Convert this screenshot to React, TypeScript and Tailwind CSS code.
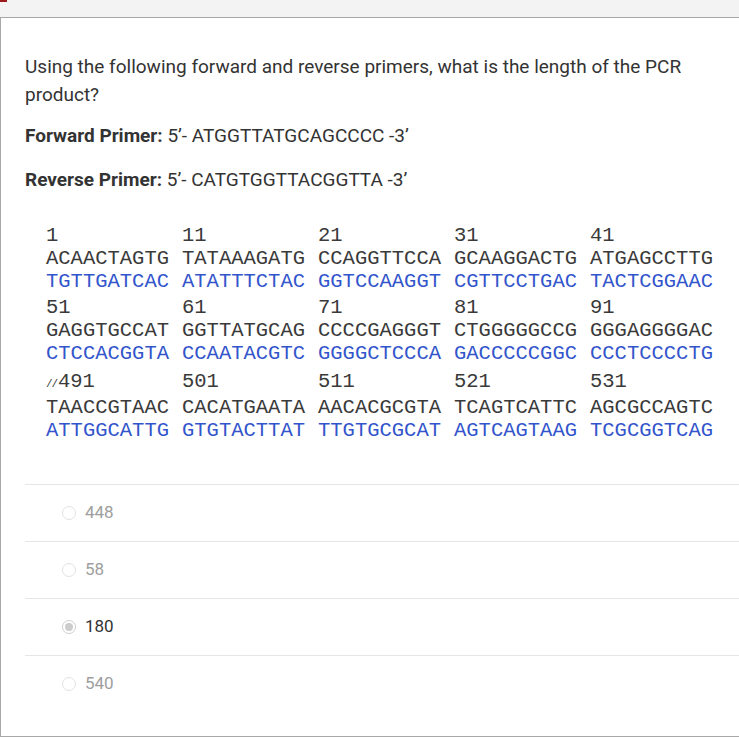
import React from 'react'

type SeqBlock = {
  nums: string[]
  top: string[]
  bottom: string[]
  cut?: boolean
}

const blocks: SeqBlock[] = [
  {
    nums: ['1', '11', '21', '31', '41'],
    top: ['ACAACTAGTG', 'TATAAAGATG', 'CCAGGTTCCA', 'GCAAGGACTG', 'ATGAGCCTTG'],
    bottom: ['TGTTGATCAC', 'ATATTTCTAC', 'GGTCCAAGGT', 'CGTTCCTGAC', 'TACTCGGAAC'],
  },
  {
    nums: ['51', '61', '71', '81', '91'],
    top: ['GAGGTGCCAT', 'GGTTATGCAG', 'CCCCGAGGGT', 'CTGGGGGCCG', 'GGGAGGGGAC'],
    bottom: ['CTCCACGGTA', 'CCAATACGTC', 'GGGGCTCCCA', 'GACCCCCGGC', 'CCCTCCCCTG'],
  },
  {
    nums: ['491', '501', '511', '521', '531'],
    top: ['TAACCGTAAC', 'CACATGAATA', 'AACACGCGTA', 'TCAGTCATTC', 'AGCGCCAGTC'],
    bottom: ['ATTGGCATTG', 'GTGTACTTAT', 'TTGTGCGCAT', 'AGTCAGTAAG', 'TCGCGGTCAG'],
    cut: true,
  },
]

const options = [
  {label: '448', selected: false},
  {label: '58', selected: false},
  {label: '180', selected: true},
  {label: '540', selected: false},
]

function Radio({checked}: { checked: boolean }) {
  return (
    <span
      className={
        checked
          ? 'w-[14px] h-[14px] rounded-full border border-[#cfcfcf] bg-white flex items-center justify-center'
          : 'w-[14px] h-[14px] rounded-full border border-[#e2e2e2] bg-white'
      }
    >
      {checked && <span className="w-[8px] h-[8px] rounded-full bg-[#cccccc]"/>}
    </span>
  )
}

function Sequence() {
  return (
    <div className="ml-[21px] text-[20.5px] leading-[23px] text-[#3a3a3a]"
         style={{fontFamily: '"Liberation Mono", "DejaVu Sans Mono", monospace'}}>
      {blocks.map((b, bi) => (
        <div key={bi} className={bi === 0 ? '' : bi === 1 ? 'mt-[3px]' : 'mt-[5px]'}>
          <div className="grid grid-cols-[repeat(5,136px)]">
            {b.nums.map((n, i) => (
              <span key={n} className="flex items-baseline">
                {b.cut && i === 0 && (
                  <span className="w-[12px] text-[11px] tracking-[-1px]">//</span>
                )}
                <span>{n}</span>
              </span>
            ))}
          </div>
          <div className="grid grid-cols-[repeat(5,136px)]">
            {b.top.map((s) => <span key={s}>{s}</span>)}
          </div>
          <div className="grid grid-cols-[repeat(5,136px)] text-[#3355cc]">
            {b.bottom.map((s) => <span key={s}>{s}</span>)}
          </div>
        </div>
      ))}
    </div>
  )
}

export default function App() {
  return (
    <div className="w-[739px] h-[737px] overflow-hidden bg-white"
         style={{fontFamily: 'Roboto, "Liberation Sans", sans-serif'}}>
      {/* window strip */}
      <div className="relative h-[18px] bg-[#f3f3f3] border-b border-[#a8a8a8]">
        <span className="absolute left-0 top-0 w-[7px] h-[2px] bg-[#9b1a1a]"/>
      </div>

      {/* question panel */}
      <div className="w-[760px] h-[719px] border-l border-b border-[#a8a8a8] pl-[24px] pt-[35px]">
        <p className="max-w-[680px] text-[19px] leading-[28px] text-[#333333] mb-[13px]">
          Using the following forward and reverse primers, what is the length of the PCR product?
        </p>
        <p className="text-[19px] leading-[28px] text-[#333333] mb-[16px]">
          <span className="font-bold">Forward Primer:</span> 5’- ATGGTTATGCAGCCCC -3’
        </p>
        <p className="text-[19px] leading-[28px] text-[#333333]">
          <span className="font-bold">Reverse Primer:</span> 5’- CATGTGGTTACGGTTA -3’
        </p>

        <div className="mt-[30px]">
          <Sequence/>
        </div>

        {/* answers */}
        <div className="mt-[42px]">
          {options.map((o) => (
            <div key={o.label}
                 className="h-[57px] border-t border-[#e6e6e6] flex items-center gap-[9px] pl-[37px]">
              <Radio checked={o.selected}/>
              <span className={o.selected ? 'text-[17px] text-[#333333]' : 'text-[17px] text-[#9e9e9e]'}>
                {o.label}
              </span>
            </div>
          ))}
        </div>
      </div>
    </div>
  )
}
